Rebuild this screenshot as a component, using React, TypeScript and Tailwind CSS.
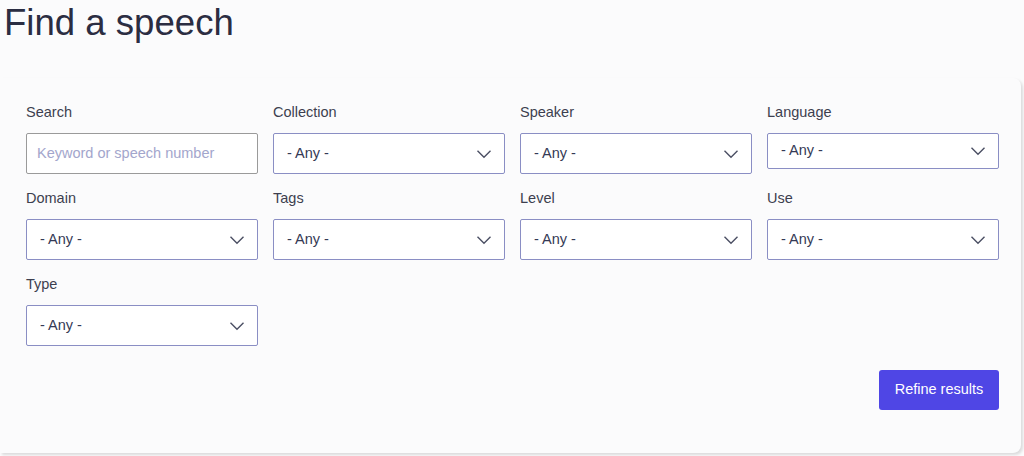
import React from "react";

const Chevron = () => (
  <svg width="16" height="10" viewBox="0 0 16 10" fill="none" className="shrink-0">
    <path d="M1.5 1.8L8 8.2L14.5 1.8" stroke="#4b4f63" strokeWidth="1.4" />
  </svg>
);

function Select({ label, short }: { label: string; short?: boolean }) {
  return (
    <div className="flex flex-col">
      <div className="h-[20px] leading-[20px] text-[14.5px] text-[#3d3f4f]">{label}</div>
      <div
        className={`mt-[11px] ${short ? "h-[36px]" : "h-[41px]"} flex items-center justify-between rounded-[2px] border border-[#8a8ec4] bg-white pl-[13px] pr-[12px]`}
      >
        <span className="text-[14.5px] text-[#353a55]">- Any -</span>
        <Chevron />
      </div>
    </div>
  );
}

export default function App() {
  return (
    <div
      className="min-h-[456px] w-[1024px] bg-[#fbfbfc]"
      style={{ fontFamily: '"Liberation Sans", Arial, sans-serif' }}
    >
      <h1 className="pl-[4px] pt-[1px] text-[36.6px] leading-[44px] text-[#2b2d42]">Find a speech</h1>
      <div className="mt-[33px] mr-[3px] rounded-br-[8px] rounded-tr-[8px] bg-[#fbfbfc] pl-[26px] pr-[22px] pt-[24px] pb-[43px] shadow-[2px_2px_3px_rgba(0,0,0,0.13)]">
        <div className="grid grid-cols-4 gap-x-[15px] gap-y-[14px]">
          <div className="flex flex-col">
            <div className="h-[20px] leading-[20px] text-[14.5px] text-[#3d3f4f]">Search</div>
            <div className="mt-[11px] h-[41px] flex items-center rounded-[2px] border border-[#9a9a9a] bg-white pl-[10px]">
              <span className="text-[14.5px] text-[#a3a6cc]">Keyword or speech number</span>
            </div>
          </div>
          <Select label="Collection" />
          <Select label="Speaker" />
          <div className="self-start">
            <Select label="Language" short />
          </div>
          <Select label="Domain" />
          <Select label="Tags" />
          <Select label="Level" />
          <Select label="Use" />
          <Select label="Type" />
        </div>
        <div className="mt-[24px] flex justify-end">
          <button className="h-[40px] w-[120px] rounded-[3px] bg-[#4f46e5] text-[14.5px] text-white">
            Refine results
          </button>
        </div>
      </div>
    </div>
  );
}
